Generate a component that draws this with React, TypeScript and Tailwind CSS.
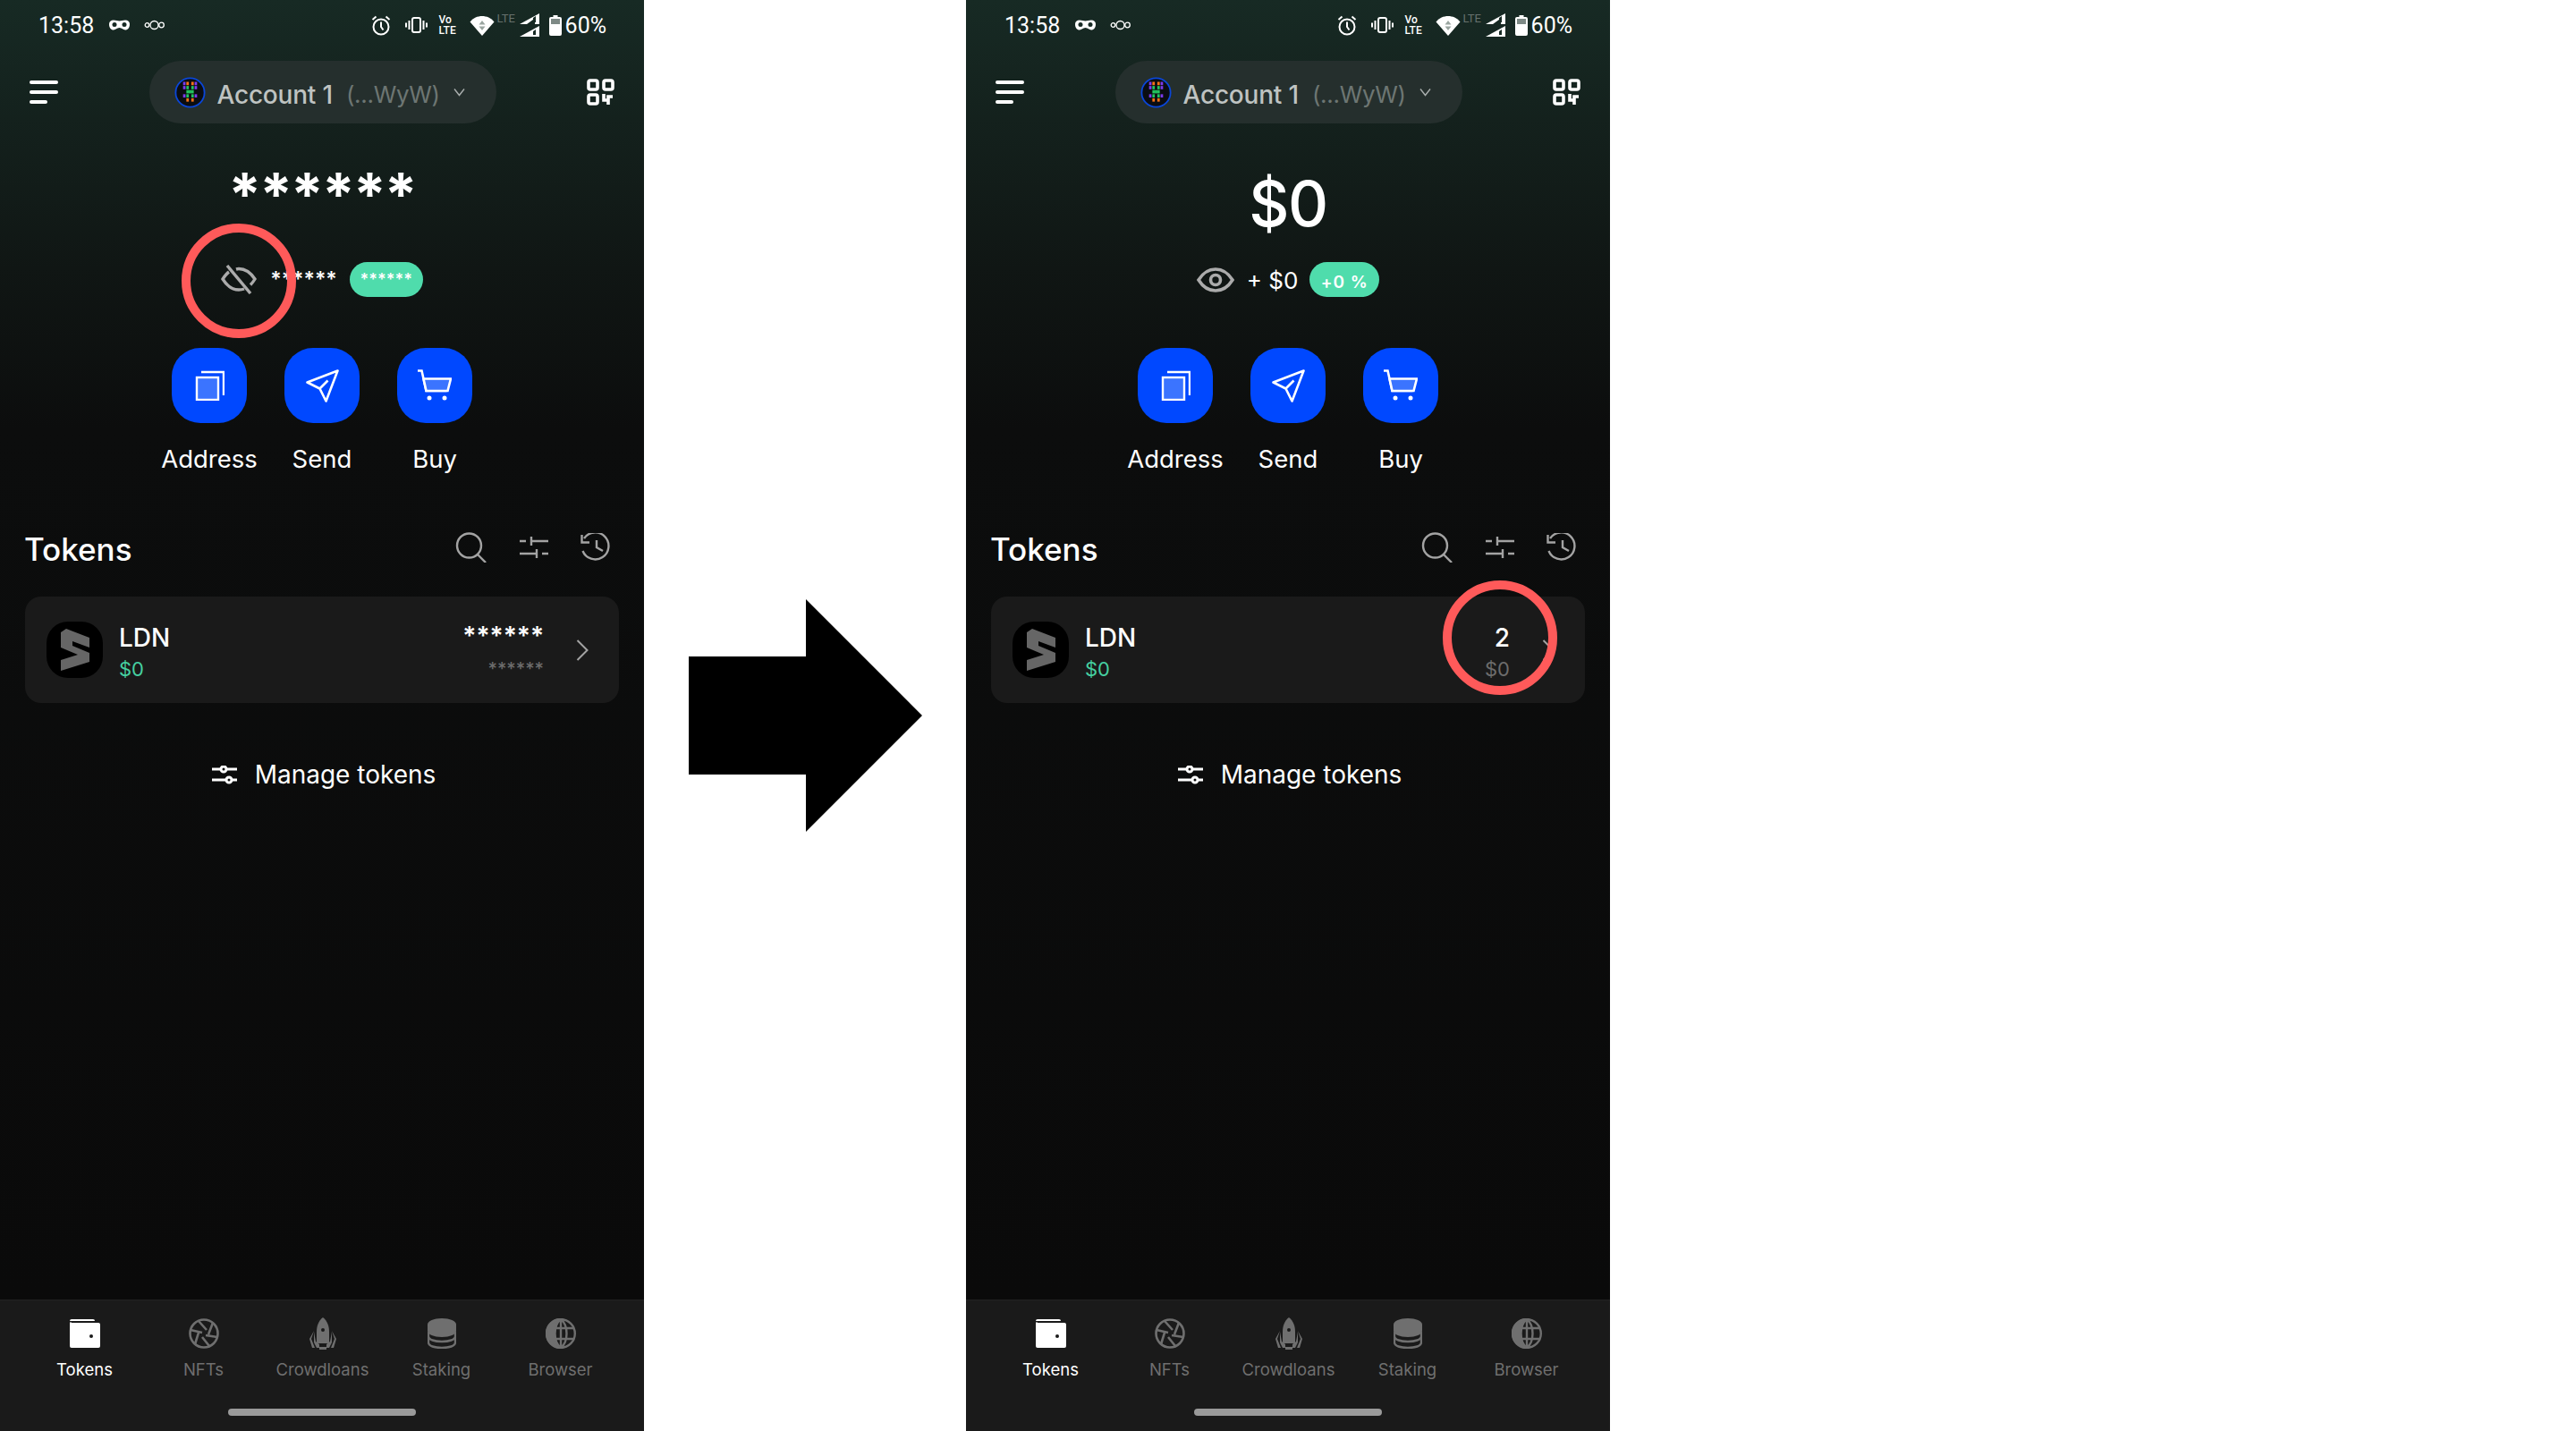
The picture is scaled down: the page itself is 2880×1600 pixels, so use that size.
import type { ReactNode } from 'react';

const actions = [
  { label: 'Address', icon: <CopyIcon /> },
  { label: 'Send', icon: <SendIcon /> },
  { label: 'Buy', icon: <CartIcon /> },
];

const navItems = [
  { label: 'Tokens', icon: <WalletIcon />, active: true },
  { label: 'NFTs', icon: <ApertureIcon />, active: false },
  { label: 'Crowdloans', icon: <RocketIcon />, active: false },
  { label: 'Staking', icon: <StackIcon />, active: false },
  { label: 'Browser', icon: <GlobeIcon />, active: false },
];

function MaskIcon() {
  return (
    <svg width="23" height="12" viewBox="0 0 23 12" fill="#fff">
      <path d="M5 0.5c2.5 0 4.5 1 6.5 1s4-1 6.5-1c3 0 5 1.500 5 4.500 0 4-2 6.500-5 6.500-2.500 0-3.500-2.500-6.500-2.500s-4 2.500-6.500 2.500c-3 0-5-2.500-5-6.500 0-3 2-4.500 5-4.500z" />
      <circle cx="6" cy="5.500" r="2.500" fill="#172a24" />
      <circle cx="17" cy="5.500" r="2.500" fill="#172a24" />
    </svg>
  );
}

function LinkDotsIcon() {
  return (
    <svg width="23" height="12" viewBox="0 0 23 12" fill="none" stroke="#fff" strokeWidth="1.300">
      <circle cx="11.500" cy="6" r="4.500" />
      <circle cx="3.500" cy="6" r="2.300" />
      <circle cx="19.500" cy="6" r="2.800" />
    </svg>
  );
}

function AlarmIcon() {
  return (
    <svg width="22" height="23" viewBox="0 0 22 23" fill="none" stroke="#fff" strokeWidth="2">
      <circle cx="11" cy="13" r="8.500" />
      <path d="M11 7.500v5.500l2.500 3.500M1.500 5l4-3.500M20.500 5l-4-3.500" />
    </svg>
  );
}

function VibrateIcon() {
  return (
    <svg width="25" height="18" viewBox="0 0 25 18" fill="none" stroke="#fff" strokeWidth="2">
      <rect x="8" y="1" width="9" height="16" rx="2" />
      <path d="M4.500 4v10M1 6.500v5M20.500 4v10M24 6.500v5" />
    </svg>
  );
}

function WifiIcon() {
  return (
    <svg width="28" height="23" viewBox="0 0 28 23">
      <path d="M14 23L0.500 7.500C4 3 9 1 14 1s10 2 13.500 6.500z" fill="#fff" />
      <path d="M14 6l3.500 4.500h-7zM14 17l-3.500-4.500h7z" fill="#9aa5a0" />
    </svg>
  );
}

function SignalIcon() {
  return (
    <svg width="22" height="26" viewBox="0 0 22 26" fill="#fff">
      <path d="M22 0v12H17V5.500L8 12H0z" />
      <path d="M22 14v12H0l22-12z" />
      <path d="M18 18v6h-3v-4z" fill="#172a24" />
      <path d="M18 3v7h-3V5z" fill="#172a24" />
    </svg>
  );
}

function BatteryIcon() {
  return (
    <svg width="14" height="23" viewBox="0 0 14 23" fill="#fff">
      <path d="M4.500 0h5v2h2.500a2 2 0 0 1 2 2v17a2 2 0 0 1-2 2H2a2 2 0 0 1-2-2V4a2 2 0 0 1 2-2h2.500z" />
      <rect x="2" y="4" width="10" height="6" fill="#7e8a86" />
    </svg>
  );
}

function StatusBar() {
  return (
    <div className="flex h-[56px] items-center pl-[43px] pr-[42px] font-[Roboto,sans-serif] text-white">
      <span className="w-[79px] text-[25px] leading-none">13:58</span>
      <MaskIcon />
      <span className="ml-[16px] flex">
        <LinkDotsIcon />
      </span>
      <div className="ml-auto flex items-center">
        <AlarmIcon />
        <span className="ml-[16px] flex">
          <VibrateIcon />
        </span>
        <span className="ml-[13px] flex w-[26px] flex-col text-[12px] font-medium leading-[12px]">
          <span>Vo</span>
          <span>LTE</span>
        </span>
        <span className="ml-[8px] flex">
          <WifiIcon />
        </span>
        <span className="ml-[3px] mb-[16px] w-[25px] text-[13px] leading-none text-[#66716d]">LTE</span>
        <SignalIcon />
        <span className="ml-[11px] flex">
          <BatteryIcon />
        </span>
        <span className="ml-[4px] text-[25px] leading-none">60%</span>
      </div>
    </div>
  );
}

function AvatarIcon() {
  const dots = [
    [12, 8, '#7c3aed'], [16, 8, '#f97316'], [22, 8, '#f97316'], [26, 8, '#7c3aed'],
    [12, 13, '#7c3aed'], [16, 13, '#22c55e'], [22, 13, '#22c55e'], [26, 13, '#7c3aed'],
    [16, 18, '#22c55e'], [19, 18, '#22c55e'], [22, 18, '#22c55e'],
    [12, 23, '#7c3aed'], [16, 23, '#22c55e'], [22, 23, '#22c55e'], [26, 23, '#7c3aed'],
    [16, 28, '#f97316'], [22, 28, '#f97316'],
  ] as const;
  return (
    <svg width="35" height="35" viewBox="0 0 38 38">
      <circle cx="19" cy="19" r="17.500" fill="#0b0d12" stroke="#0a46d8" strokeWidth="2" />
      {dots.map(([x, y, c], i) => (
        <rect key={i} x={x - 1.500} y={y - 2} width="3" height="4" fill={c} />
      ))}
    </svg>
  );
}

function Header() {
  return (
    <div className="mt-[12px] flex h-[70px] items-center justify-between px-[33px]">
      <div className="flex w-[32px] flex-col gap-[7px]">
        <span className="h-[4px] w-[32px] rounded-full bg-white" />
        <span className="h-[4px] w-[32px] rounded-full bg-white" />
        <span className="h-[4px] w-[20px] rounded-full bg-white" />
      </div>
      <div className="flex h-[70px] w-[388px] items-center rounded-full bg-[#252f2d] pl-[28px]">
        <AvatarIcon />
        <span className="ml-[13px] pt-[6px] text-[28px] font-medium leading-none tracking-[-0.2px] text-[#bfc3c1]">Account 1</span>
        <span className="ml-[15px] pt-[6px] text-[26px] leading-none tracking-[-0.3px] text-[#6d7673]">(...WyW)</span>
        <svg className="ml-[15px]" width="13" height="10" viewBox="0 0 13 10" fill="none" stroke="#a9aead" strokeWidth="1.400">
          <path d="M1 1.500l5.500 7 5.500-7" />
        </svg>
      </div>
      <svg width="31" height="30" viewBox="0 0 31 30" fill="none" stroke="#fff" strokeWidth="3.600">
        <rect x="2" y="2" width="10" height="10" rx="2" />
        <rect x="19" y="2" width="10" height="10" rx="2" />
        <rect x="2" y="18" width="10" height="10" rx="2" />
        <path d="M19 17v7h5M29 20h-5v9" />
      </svg>
    </div>
  );
}

function EyeIcon() {
  return (
    <svg width="42" height="28" viewBox="0 0 42 28" fill="none" stroke="#ababab" strokeWidth="3.600">
      <path d="M2 14C7 6 13 2 21 2s14 4 19 12c-5 8-11 12-19 12S7 22 2 14z" />
      <circle cx="21" cy="14" r="5.500" />
    </svg>
  );
}

function EyeOffIcon() {
  return (
    <svg width="40" height="33" viewBox="0 0 40 33" fill="none" stroke="#ababab" strokeWidth="3.400">
      <path d="M9 8C6 10 4 13 2 16c5 8 10 12 18 12 2 0 4-.3 6-1M17 5c1-.3 2-.5 3-.5 8 0 13 4 18 11.500-1.500 2.500-3 4.500-5 6.500" />
      <path d="M7 1l26 31" />
    </svg>
  );
}

function CopyIcon() {
  return (
    <svg width="34" height="34" viewBox="0 0 34 34" fill="none" stroke="#fff" strokeWidth="2.400">
      <rect x="3" y="8" width="24" height="25" fill="#3b74ff" />
      <path d="M8 2h25v26" />
    </svg>
  );
}

function SendIcon() {
  return (
    <svg width="37" height="37" viewBox="0 0 37 37" fill="none" stroke="#fff" strokeWidth="2.600" strokeLinejoin="round">
      <path d="M35.500 1.500L1.500 14.500l14 7 7 14z" />
      <path d="M15.500 21.500l9-9" />
    </svg>
  );
}

function CartIcon() {
  return (
    <svg width="38" height="36" viewBox="0 0 38 36" fill="none" stroke="#fff" strokeWidth="2.600">
      <path d="M0 1.500h4.500l5 22.500h23" />
      <path d="M6.500 10.500H37L33.500 24H9.500z" fill="#3b74ff" />
      <circle cx="13" cy="32" r="2.500" fill="#fff" stroke="none" />
      <circle cx="30" cy="32" r="2.500" fill="#fff" stroke="none" />
    </svg>
  );
}

function SearchIcon() {
  return (
    <svg width="36" height="34" viewBox="0 0 36 34" fill="none" stroke="#a3a3a3" strokeWidth="2.400">
      <circle cx="15.500" cy="15" r="13.500" />
      <path d="M25 25l9 9" />
    </svg>
  );
}

function SlidersIcon({ color = '#a3a3a3' }: { color?: string }) {
  return (
    <svg width="32" height="24" viewBox="0 0 32 24" fill="none" stroke={color} strokeWidth="2.400">
      <path d="M0 5h7M13 5h19M13 0v10M0 19h19M25 19h7M19 14v10" />
    </svg>
  );
}

function HistoryIcon() {
  return (
    <svg width="34" height="32" viewBox="0 0 34 32" fill="none" stroke="#a3a3a3" strokeWidth="2.400">
      <path d="M4 6a15 15 0 1 1-1.500 14" />
      <path d="M1.500 2v8.500H10" />
      <path d="M18 8v8l7 4" />
    </svg>
  );
}

function TokenLogo() {
  return (
    <div className="flex h-[63px] w-[63px] shrink-0 items-center justify-center rounded-[24px] bg-black">
      <svg width="32" height="47" viewBox="0 0 32 47" fill="#666">
        <path d="M6 0l26 10v11L13 14v5l19 8v10L0 47V35l19-6-19-8V4z" />
      </svg>
    </div>
  );
}

function TokenRow({ hidden }: { hidden: boolean }) {
  return (
    <div className="mx-[28px] mt-[34px] flex h-[119px] items-center rounded-[18px] bg-[#1a1a1a] pl-[24px] pr-[34px]">
      <TokenLogo />
      <div className="ml-[18px] flex flex-col pt-[4px]">
        <span className="text-[28px] font-medium leading-[34px] text-white">LDN</span>
        <span className="mt-[5px] text-[22px] leading-[26px] text-[#45cfa0]">$0</span>
      </div>
      <div className="ml-auto mr-[36px] flex flex-col items-end pt-[4px]">
        {hidden ? (
          <>
            <span className="mt-[-2px] h-[34px] text-[28px] font-semibold leading-[34px] text-white">******</span>
            <span className="mt-[7px] h-[26px] text-[20px] font-medium leading-[26px] text-[#6c6c6c]">******</span>
          </>
        ) : (
          <>
            <span className="h-[34px] text-[28px] font-medium leading-[34px] text-white">2</span>
            <span className="mt-[5px] h-[26px] text-[22px] leading-[26px] text-[#6c6c6c]">$0</span>
          </>
        )}
      </div>
      <svg width="14" height="24" viewBox="0 0 14 24" fill="none" stroke="#a3a3a3" strokeWidth="2">
        <path d="M1.500 1L12.500 12 1.500 23" />
      </svg>
    </div>
  );
}

function WalletIcon() {
  return (
    <svg width="34" height="32" viewBox="0 0 34 32" fill="#fff">
      <path d="M2 0h24a2 2 0 0 1 2 2H2z" />
      <path d="M2 4h30a2 2 0 0 1 2 2v24a2 2 0 0 1-2 2H2a2 2 0 0 1-2-2V2a2 2 0 0 1 2-2z" />
      <rect x="0" y="2" width="28" height="1.500" fill="#1a1a1a" />
      <circle cx="24" cy="19" r="2" fill="#1a1a1a" />
    </svg>
  );
}

function ApertureIcon() {
  return (
    <svg width="34" height="34" viewBox="0 0 34 34" fill="none" stroke="#6f6f6f" strokeWidth="2.600">
      <circle cx="17" cy="17" r="15.500" />
      <path d="M11 3l9 10M27 5l-5 13M32 21l-13-2M23 31l-8-10M7 29l4-13M2 13l13 3" />
    </svg>
  );
}

function RocketIcon() {
  return (
    <svg width="32" height="37" viewBox="0 0 32 37" fill="#6f6f6f">
      <path d="M16 0c5 4 7 10 7 16v13H9V16C9 10 11 4 16 0z" />
      <path d="M6 16v12l3 6h3v-4l-4-3zM26 16v12l-3 6h-3v-4l4-3z" />
      <path d="M6 15L1 24l3 10h3L3 24zM26 15l5 9-3 10h-3l4-10z" />
      <rect x="12" y="33" width="8" height="3" />
      <circle cx="16" cy="14" r="2" fill="#1a1a1a" />
    </svg>
  );
}

function StackIcon() {
  return (
    <svg width="32" height="34" viewBox="0 0 32 34" fill="#6f6f6f">
      <path d="M0 7c0-4 7-7 16-7s16 3 16 7v7c0 4-7 7-16 7S0 18 0 14z" />
      <path
        d="M1 15v5c0 4 7 6 15 6s15-2 15-6v-5M1 21v6c0 4 7 6 15 6s15-2 15-6v-6"
        fill="none"
        stroke="#6f6f6f"
        strokeWidth="2.400"
      />
    </svg>
  );
}

function GlobeIcon() {
  return (
    <svg width="34" height="34" viewBox="0 0 34 34" fill="none" stroke="#6f6f6f" strokeWidth="2.400">
      <path d="M17 1a16 16 0 0 0 0 32c-5-4-6.500-10-6.500-16S12 5 17 1z" fill="#6f6f6f" />
      <circle cx="17" cy="17" r="15.800" />
      <path d="M17 1c5 4 6.500 10 6.500 16S22 29 17 33M17 1v32M2 11h30M2 23h30" />
    </svg>
  );
}

function BottomNav() {
  return (
    <div className="mt-auto flex h-[147px] flex-col border-t border-[#222222] bg-[#1a1a1a]">
      <div className="flex pl-[28px] pr-[26px] pt-[18px]">
        {navItems.map((item) => (
          <div key={item.label} className="flex w-[133px] flex-col items-center">
            <div className="flex h-[38px] items-center justify-center">{item.icon}</div>
            <span className={`mt-[9px] text-[18.500px] leading-[24px] ${item.active ? 'text-white' : 'text-[#6f6f6f]'}`}>
              {item.label}
            </span>
          </div>
        ))}
      </div>
      <div className="mx-auto mt-[32px] h-[8px] w-[210px] rounded-full bg-[#9a9a9a]" />
    </div>
  );
}

function RedCircle({ className }: { className: string }) {
  return <div className={`absolute h-[128px] w-[128px] rounded-full border-[10px] border-[#ff5a5a] ${className}`} />;
}

function Phone({ hidden, children }: { hidden: boolean; children: ReactNode }) {
  return (
    <div className="relative flex h-[1600px] w-[720px] shrink-0 flex-col overflow-hidden bg-[linear-gradient(180deg,#172a24_0px,#101614_300px,#0c0d0d_480px,#0a0a0a_1450px)] font-[Inter,sans-serif] text-white">
      <StatusBar />
      <Header />

      <div className="mt-[55px] flex h-[70px] justify-center">
        {hidden ? (
          <span className="mt-[-11px] text-[66px] font-bold leading-[70px] tracking-[-2px]">******</span>
        ) : (
          <span className="text-[70px] font-medium leading-[70px] tracking-[-1.500px]">$0</span>
        )}
      </div>

      <div className="mt-[30px] flex h-[39px] items-center justify-center">
        {hidden ? (
          <>
            <EyeOffIcon />
            <span className="ml-[15px] text-[23px] font-semibold leading-none">******</span>
            <span className="ml-[14px] flex h-[39px] w-[82px] items-center justify-center rounded-full bg-[#4fdcac] text-[18px] font-semibold leading-none">
              ******
            </span>
          </>
        ) : (
          <>
            <EyeIcon />
            <span className="ml-[14px] pt-[2px] text-[26px] leading-none">+ $0</span>
            <span className="ml-[13px] flex h-[39px] w-[78px] items-center justify-center rounded-full bg-[#4fdcac] pt-[5px] text-[19px] font-semibold leading-none tracking-[1px]">
              +0 %
            </span>
          </>
        )}
      </div>

      <div className="mt-[57px] flex justify-center">
        {actions.map((action) => (
          <div key={action.label} className="flex w-[126px] flex-col items-center">
            <div className="flex h-[84px] w-[84px] items-center justify-center rounded-[32px] bg-[#0048ff]">
              {action.icon}
            </div>
            <span className="mt-[23px] text-[27.500px] leading-[34px] text-white">{action.label}</span>
          </div>
        ))}
      </div>

      <div className="mt-[67px] flex h-[36px] items-center px-[28px]">
        <span className="mt-[-2px] ml-[-1px] text-[35px] font-medium leading-none">Tokens</span>
        <div className="ml-auto mb-[6px] flex items-center">
          <SearchIcon />
          <span className="ml-[36px] flex">
            <SlidersIcon />
          </span>
          <span className="ml-[36px] mr-[9px] flex">
            <HistoryIcon />
          </span>
        </div>
      </div>

      <TokenRow hidden={hidden} />

      <div className="mt-[62px] flex items-center justify-center pl-[4px]">
        <svg width="28" height="21" viewBox="0 0 28 21" fill="none" stroke="#fff" strokeWidth="3">
          <path d="M0 4h9M17 4h11M0 16h15M23 16h5" />
          <circle cx="13" cy="4" r="3" />
          <circle cx="19" cy="16" r="3" />
        </svg>
        <span className="ml-[20px] text-[28px] leading-[36px]">Manage tokens</span>
      </div>

      <BottomNav />
      {children}
    </div>
  );
}

export default function App() {
  return (
    <div className="flex h-[1600px] w-[2880px] bg-white">
      <Phone hidden>
        <RedCircle className="left-[203px] top-[250px]" />
      </Phone>

      <div className="flex w-[360px] shrink-0 items-center justify-center">
        <svg width="261" height="260" viewBox="0 0 261 260" fill="#000">
          <path d="M0 64h131V0l130 130-130 130v-64H0z" />
        </svg>
      </div>

      <Phone hidden={false}>
        <RedCircle className="left-[533px] top-[649px]" />
      </Phone>
    </div>
  );
}
